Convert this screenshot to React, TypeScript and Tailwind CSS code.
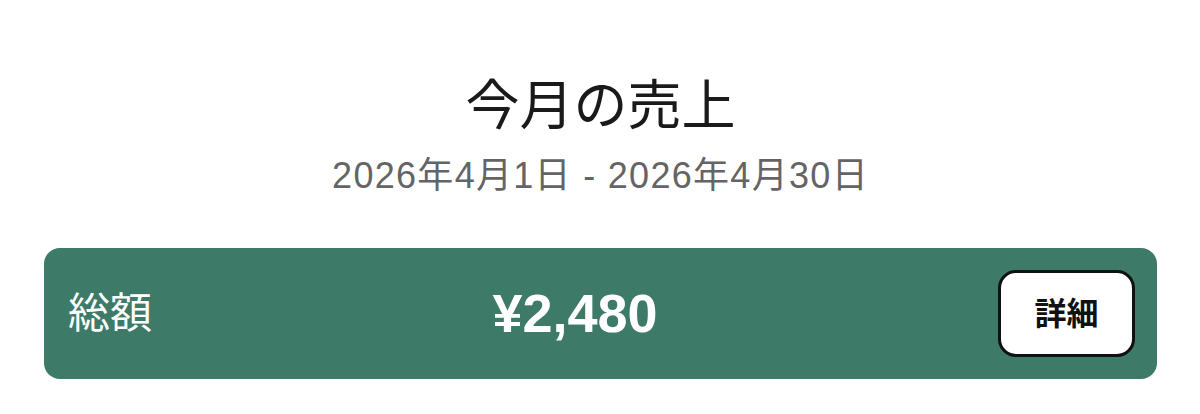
export default function App() {
  return (
    <div
      className="min-h-screen bg-white pl-11 pr-[43px] pt-[74px]"
      style={{ fontFamily: '"Liberation Sans", "Noto Sans CJK JP", sans-serif' }}
    >
      <div className="flex flex-col items-center">
        <h2 className="text-[54px] leading-[64px] text-[#1a1a1a]">今月の売上</h2>
        <p className="mt-4 text-[36px] leading-[43px] tracking-[1.3px] text-[#646466]">
          2026年4月1日 - 2026年4月30日
        </p>
      </div>

      <div className="mt-[51px] flex h-[131px] items-center justify-between rounded-2xl bg-[#3d7a68] pl-6 pr-[22px]">
        <span className="text-[42px] text-white">総額</span>
        <span className="text-[54px] font-bold text-white">¥2,480</span>
        <button className="flex h-[87px] w-[137px] items-center justify-center rounded-[18px] border-[3px] border-[#111] bg-white text-[32px] font-bold text-[#111]">
          詳細
        </button>
      </div>
    </div>
  );
}
